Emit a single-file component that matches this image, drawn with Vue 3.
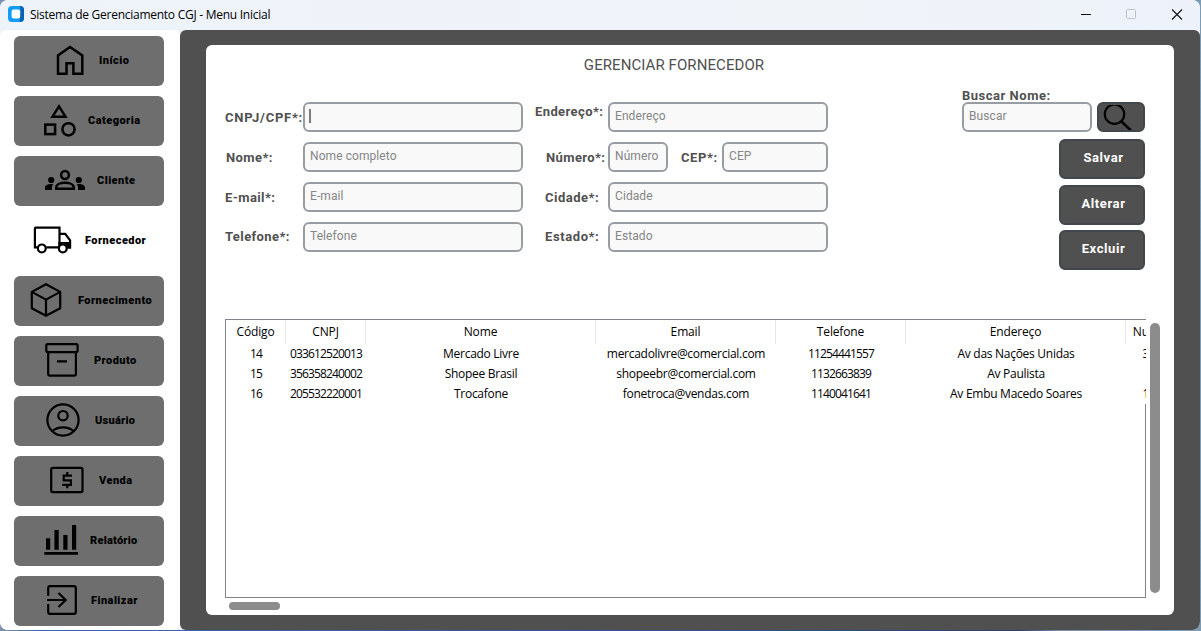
<script setup>
const menu = [
  { id: 'inicio', label: 'Início' },
  { id: 'categoria', label: 'Categoria' },
  { id: 'cliente', label: 'Cliente' },
  { id: 'fornecedor', label: 'Fornecedor', active: true },
  { id: 'fornecimento', label: 'Fornecimento' },
  { id: 'produto', label: 'Produto' },
  { id: 'usuario', label: 'Usuário' },
  { id: 'venda', label: 'Venda' },
  { id: 'relatorio', label: 'Relatório' },
  { id: 'finalizar', label: 'Finalizar' },
]
const columns = ['Código', 'CNPJ', 'Nome', 'Email', 'Telefone', 'Endereço', 'Numero']
const rows = [
  ['14', '033612520013', 'Mercado Livre', 'mercadolivre@comercial.com', '11254441557', 'Av das Nações Unidas', '3003'],
  ['15', '356358240002', 'Shopee Brasil', 'shopeebr@comercial.com', '1132663839', 'Av Paulista', '100'],
  ['16', '205532220001', 'Trocafone', 'fonetroca@vendas.com', '1140041641', 'Av Embu Macedo Soares', '1000'],
]
const isDigits = (v) => /^\d+$/.test(v)
</script>

<template>
  <div class="desktop">
    <div class="window">
      <header class="titlebar">
        <svg class="logo" width="16" height="16" viewBox="0 0 16 16">
          <rect width="16" height="16" rx="4" fill="#109cfb" />
          <path d="M12 0a4 4 0 0 1 4 4v8a4 4 0 0 1-4 4l-.5-4 1-8z" fill="#0863b5" />
          <rect x="3.600" y="3.600" width="8.600" height="8.800" rx="2" fill="#fff" />
        </svg>
        <span class="caption">Sistema de Gerenciamento CGJ - Menu Inicial</span>
        <svg class="controls" width="120" height="30" viewBox="0 0 120 30">
          <path d="M10 14.500h10" stroke="#000" />
          <rect x="55.500" y="9.500" width="9" height="9" rx="1" fill="none" stroke="#bfc3c9" />
          <path d="M101 9.500l10 10M111 9.500l-10 10" stroke="#111" stroke-width="1.100" />
        </svg>
      </header>

      <div class="body">
        <nav class="sidebar">
          <button v-for="m in menu" :key="m.id" class="nav" :class="['nav-' + m.id, { active: m.active }]">
            <svg class="icon" width="40" height="40" viewBox="0 0 40 40">
              <path v-if="m.id === 'inicio'" d="M8 32.700V14.500L20 6l12.300 8.500v18.200h-8.900V22.300h-6.900v10.400z" />
              <g v-else-if="m.id === 'categoria'">
                <path d="M19 5.300L25.500 15.700h-13z" />
                <rect x="5.300" y="23.600" width="9.800" height="9.500" />
                <circle cx="28.500" cy="28.300" r="6.100" />
              </g>
              <g v-else-if="m.id === 'cliente'">
                <circle cx="20" cy="14" r="3.900" />
                <path d="M11.200 27.700v-1.200c0-3 4-4.700 8.800-4.700s8.800 1.700 8.800 4.700v1.200z" />
                <g class="solid">
                  <circle cx="6.200" cy="19" r="3.100" /><circle cx="33.800" cy="19" r="3.100" />
                  <path d="M0 29v-2.600c0-2.400 3.500-3.700 8.200-3.300-.9 1.200-1.200 2.400-1.200 3.400V29zM40 29v-2.600c0-2.400-3.500-3.700-8.200-3.300.9 1.200 1.200 2.400 1.200 3.400V29z" />
                </g>
              </g>
              <g v-else-if="m.id === 'fornecedor'" class="thin">
                <path d="M4.700 26.300H1.900V7.600q0-1 1-1H26.500v19.700H13.200" />
                <path d="M26.500 12.800h5.700l4.900 6.500v7h-3M26.500 26.300v-5" />
                <path class="solid" d="M26 21h12v6.500h-3.300a5 5 0 0 0-8.700-3z" />
                <circle cx="8.800" cy="27.400" r="3.900" />
                <circle cx="29.800" cy="27.400" r="3.900" fill="#fff" />
              </g>
              <path v-else-if="m.id === 'fornecimento'" class="thin" stroke-linejoin="round" d="M20 3.200l14.200 7.700v16.400L20 34.700 5.800 27.300V10.900zM5.800 10.900L20 18.600l14.200-7.700M20 18.600v16" />
              <g v-else-if="m.id === 'produto'" class="thin">
                <rect x="4.300" y="3.100" width="31.300" height="8" rx="1.500" />
                <path d="M6.200 11v22q0 1.600 1.600 1.600h24.500q1.600 0 1.600-1.600V11M15 20.300h10" />
              </g>
              <g v-else-if="m.id === 'usuario'" class="thin">
                <circle cx="20" cy="19" r="15.600" />
                <circle cx="20" cy="14.700" r="4.700" />
                <path d="M9 30.300q4.500-4 11-4t11 4" />
              </g>
              <g v-else-if="m.id === 'venda'" class="thin">
                <rect x="4.200" y="6.900" width="31.300" height="24.200" rx="1.500" />
                <path d="M20.300 11v3.500M25 14.600h-8.300v4.700h7.200v4.600h-8.600M20.300 24v3.300" />
              </g>
              <g v-else-if="m.id === 'relatorio'" class="solid">
                <path d="M5 17.300h4.200v11.500H5zM13.400 9h4.300v19.800h-4.300zM22.300 14h4.200v14.800h-4.200zM31 4h4.200v24.800H31zM3.300 31h33.700v2.800H3.300z" />
              </g>
              <g v-else class="thin">
                <path d="M6.200 14.700V7q0-1.900 1.900-1.900h23.800q1.900 0 1.900 1.900v24q0 1.900-1.900 1.900H8.100q-1.900 0-1.900-1.900v-8M5 19h19M16.500 12l7.200 7-7.200 7" />
              </g>
            </svg>
            <span class="nav-label">{{ m.label }}</span>
          </button>
        </nav>

        <main class="stage">
          <section class="card">
            <h1>GERENCIAR FORNECEDOR</h1>
            <div class="top">
              <div class="form">
                <label class="cnpj">CNPJ/CPF*:</label>
                <div class="field"><i class="caret"></i></div>
                <label class="endereco">Endereço*:</label>
                <div class="field">Endereço</div>

                <label class="nome">Nome*:</label>
                <div class="field">Nome completo</div>
                <label class="numero">Número*:</label>
                <div class="split">
                  <div class="field num">Número</div>
                  <label class="cep">CEP*:</label>
                  <div class="field grow">CEP</div>
                </div>

                <label class="email">E-mail*:</label>
                <div class="field">E-mail</div>
                <label class="cidade">Cidade*:</label>
                <div class="field">Cidade</div>

                <label class="telefone">Telefone*:</label>
                <div class="field">Telefone</div>
                <label class="estado">Estado*:</label>
                <div class="field">Estado</div>
              </div>

              <aside class="actions">
                <label class="buscar">Buscar Nome:</label>
                <div class="search">
                  <div class="field grow">Buscar</div>
                  <button class="btn find">
                    <svg width="30" height="25" viewBox="0 0 30 25">
                      <circle cx="12.500" cy="9.200" r="9.700" fill="none" stroke="#000" stroke-width="2.200" />
                      <path d="M19.500 16.500l10 9.500" stroke="#000" stroke-width="2.600" />
                    </svg>
                  </button>
                </div>
                <button class="btn save">Salvar</button>
                <button class="btn change">Alterar</button>
                <button class="btn remove">Excluir</button>
              </aside>
            </div>

            <div class="list">
              <div class="table">
                <div class="grid">
                  <div v-for="c in columns" :key="c" class="th">{{ c }}</div>
                  <template v-for="r in rows" :key="r[0]">
                    <div v-for="(v, i) in r" :key="i" class="td" :class="{ digits: isDigits(v), last: i === 6 }">{{ v }}</div>
                  </template>
                </div>
                <div class="blank"></div>
              </div>
              <div class="vbar"></div>
            </div>
            <div class="hbar"></div>
          </section>
        </main>
      </div>
    </div>
  </div>
</template>

<style>
body { margin: 0; overflow: hidden; }
</style>

<style scoped>
* { box-sizing: border-box; }
button { border: 0; padding: 0; margin: 0; font: inherit; }
.desktop {
  width: 1201px; height: 631px;
  background: linear-gradient(90deg, #7f93b3 0, #2f6aa8 40px, #3a5fa5 300px, #33508f 700px, #2c3f75 1020px, #7b90a8 1060px, #7b9cb5 1201px);
  font-family: Roboto, "Liberation Sans", sans-serif;
}
.window { width: 1200px; height: 630px; border-radius: 8px; overflow: hidden; background: #eef3fa; display: flex; flex-direction: column; }
.titlebar { height: 30px; flex: none; display: flex; align-items: center; padding-left: 8px; background: linear-gradient(90deg, #eef3fa 0, #f0f3f8 70%, #edf2fa 100%); }
.logo { margin-top: -2px; }
.caption { font: 12px/16px "Open Sans", "Noto Sans", sans-serif; letter-spacing: -0.26px; margin-left: 6px; color: #000; }
.controls { margin-left: auto; margin-right: 9px; }
.body { flex: 1; display: flex; }
.sidebar { width: 180px; background: #fff; border-radius: 6px; padding: 6px 16px 0 14px; display: flex; flex-direction: column; gap: 10px; }
.nav { height: 50px; flex: none; border-radius: 6px; background: #6e6e6e; display: flex; align-items: center; gap: 12px; color: #000; }
.nav.active { background: #fff; }
.nav-inicio { padding-left: 36px; gap: 9px; }
.nav-categoria { padding-left: 26px; gap: 8px; }
.nav-cliente { padding-left: 31px; }
.nav-fornecedor { padding-left: 19px; }
.nav-fornecimento { padding-left: 12px; }
.nav-produto { padding-left: 28px; }
.nav-usuario { padding-left: 29px; }
.nav-venda { padding-left: 33px; }
.nav-relatorio { padding-left: 27px; gap: 9px; }
.nav-finalizar { padding-left: 28px; gap: 9px; }
.icon { flex: none; fill: none; stroke: #000; stroke-width: 2.5; }
.thin { stroke-width: 2.2; }
.solid { fill: #000; stroke: none; }
.nav-label { font-size: 11px; font-weight: 900; letter-spacing: 0.45px; line-height: 14px; white-space: nowrap; }
.nav-relatorio .nav-label, .nav-usuario .nav-label { letter-spacing: 0.25px; }
.stage { flex: 1; background: #505050; border-radius: 6px; padding: 15px 26px; }
.card { height: 570px; background: #fff; border-radius: 6px; padding: 0 14px 0 19px; color: #505050; }
h1 { margin: 0; height: 43px; padding: 11px 37px 0 0; text-align: center; font-size: 15px; line-height: 18px; font-weight: 400; letter-spacing: 0.08px; }
.top { display: flex; height: 231px; }
.form { display: grid; grid-template-columns: 78px 220px 85px 220px; grid-auto-rows: 30px; row-gap: 10px; margin-top: 14px; align-content: start; }
label { font-size: 13px; line-height: 16px; font-weight: 700; letter-spacing: 0.4px; white-space: nowrap; padding-top: 8px; }
.cnpj { letter-spacing: 0.75px; }
.nome { padding-left: 1px; }
.telefone { padding-top: 7px; }
.endereco { padding: 2px 0 0 12px; }
.numero { padding-left: 23px; }
.cidade { padding-left: 22px; letter-spacing: 0.5px; }
.estado { padding: 7px 0 0 22px; letter-spacing: 0.6px; }
.field { height: 30px; border: 2px solid #979da2; border-radius: 6px; background: #f9f9fa; color: #858585; font-size: 12px; line-height: 16px; padding: 4px 5px; white-space: nowrap; letter-spacing: 0.08px; }
.caret { display: block; width: 2px; height: 14px; margin-top: 1px; margin-left: -1px; background: #7c7c7c; }
.split { display: flex; }
.num { width: 60px; }
.cep { width: 54px; padding-left: 13px; letter-spacing: 0.6px; }
.grow { flex: 1; }
.actions { margin-left: auto; width: 183px; margin-right: 15px; display: flex; flex-direction: column; align-items: flex-end; }
.buscar { align-self: stretch; height: 14px; padding-top: 0; letter-spacing: 0.52px; }
.search { display: flex; width: 183px; gap: 5px; }
.btn { width: 86px; height: 40px; flex: none; background: #505050; border: 2px solid #41474c; border-radius: 6px; color: #fff; font-size: 13px; font-weight: 700; letter-spacing: 0.6px; padding: 0 0 3px 3px; }
.find { width: 48px; height: 30px; padding: 1px 0 0 3px; display: flex; }
.save { margin-top: 7px; }
.change { margin-top: 6px; }
.remove { margin-top: 5px; }
.list { display: flex; gap: 4px; align-items: flex-start; height: 279px; }
.table { width: 921px; height: 279px; border: solid #82828c; border-width: 1px 0 1px 1px; overflow: hidden; display: flex; flex-direction: column; font: 12px/20px "Open Sans", "Noto Sans", sans-serif; letter-spacing: -0.28px; color: #000; }
.grid { display: grid; grid-template-columns: 60px 80px 230px 180px 130px 220px 60px; grid-template-rows: 24px; grid-auto-rows: 20px; width: 960px; text-align: center; }
.th { border-right: 1px solid #e5e5e5; line-height: 24px; letter-spacing: -0.15px; }
.td { white-space: nowrap; }
.digits { letter-spacing: -0.85px; }
.last { letter-spacing: -0.1px; }
.blank { flex: 1; border-right: 1px solid #82828c; }
.vbar { width: 10px; height: 270px; border-radius: 5px; background: #8c8c8c; margin-top: 4px; }
.hbar { width: 51px; height: 8px; border-radius: 4px; background: #8c8c8c; margin: 4px 0 0 4px; }
</style>
